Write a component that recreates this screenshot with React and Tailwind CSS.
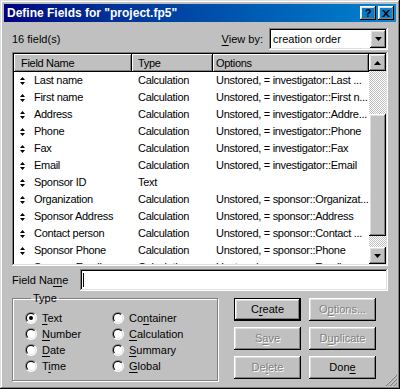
import React from 'react';

const raised = 'shadow-[inset_-1px_-1px_#000,inset_1px_1px_#fff,inset_-2px_-2px_#808080,inset_2px_2px_#dfdfdf]';
const sunken = 'shadow-[inset_-1px_-1px_#fff,inset_1px_1px_#808080,inset_-2px_-2px_#dfdfdf,inset_2px_2px_#000]';
const headCell = 'shadow-[inset_-1px_-1px_#000,inset_1px_1px_#fff,inset_-2px_-2px_#808080]';

const fields = [
    ['Last name', 'Calculation', 'Unstored, = investigator::Last ...'],
    ['First name', 'Calculation', 'Unstored, = investigator::First n...'],
    ['Address', 'Calculation', 'Unstored, = investigator::Addre...'],
    ['Phone', 'Calculation', 'Unstored, = investigator::Phone'],
    ['Fax', 'Calculation', 'Unstored, = investigator::Fax'],
    ['Email', 'Calculation', 'Unstored, = investigator::Email'],
    ['Sponsor ID', 'Text', ''],
    ['Organization', 'Calculation', 'Unstored, = sponsor::Organizat...'],
    ['Sponsor Address', 'Calculation', 'Unstored, = sponsor::Address'],
    ['Contact person', 'Calculation', 'Unstored, = sponsor::Contact ...'],
    ['Sponsor Phone', 'Calculation', 'Unstored, = sponsor::Phone'],
    ['Sponsor Email', 'Calculation', 'Unstored, = sponsor::Email'],
];

// label with one underlined access key
function Key({ text, at }) {
    return (
        <>
            {text.slice(0, at)}
            <span className="underline underline-offset-[2px]">{text[at]}</span>
            {text.slice(at + 1)}
        </>
    );
}

function MoveGlyph() {
    return (
        <svg width="5" height="8" viewBox="0 0 5 8" className="block">
            <path d="M2.5 0 L5 3 L0 3 Z M0 5 L5 5 L2.5 8 Z" fill="#000" />
        </svg>
    );
}

function Arrow({ up }) {
    return (
        <svg width="7" height="4" viewBox="0 0 7 4" className="block">
            <path d={up ? 'M3.5 0 L7 4 L0 4 Z' : 'M0 0 L7 0 L3.5 4 Z'} fill="#000" />
        </svg>
    );
}

function Radio({ checked, label }) {
    return (
        <div className="flex items-center h-[16px]">
            <div className="relative w-[12px] h-[12px] rounded-full bg-[linear-gradient(135deg,#808080_50%,#fff_50%)] p-[1px]">
                <div className="w-full h-full rounded-full bg-[linear-gradient(135deg,#000_50%,#dfdfdf_50%)] p-[1px]">
                    <div className="w-full h-full rounded-full bg-white flex items-center justify-center">
                        {checked && <div className="w-[4px] h-[4px] rounded-full bg-black" />}
                    </div>
                </div>
            </div>
            <span className="ml-[5px]">{label}</span>
        </div>
    );
}

function Btn({ children, disabled, isDefault }) {
    const text = disabled ? 'text-[#808080] [text-shadow:1px_1px_0_#fff]' : 'text-black';
    if (isDefault) {
        return (
            <div className="border border-black h-[23px]">
                <div className={`${raised} h-full flex items-center justify-center ${text}`}>{children}</div>
            </div>
        );
    }
    return <div className={`${raised} h-[23px] flex items-center justify-center ${text}`}>{children}</div>;
}

export default function App() {
    return (
        <div className="relative w-[400px] h-[389px] bg-[#c0c0c0] p-[4px] shadow-[inset_-1px_-1px_#000,inset_1px_1px_#dfdfdf,inset_-2px_-2px_#808080,inset_2px_2px_#fff] font-['Liberation_Sans',Arial,sans-serif] text-[11px] text-black leading-none overflow-hidden">
            {/* title bar */}
            <div className="h-[18px] flex items-center bg-gradient-to-r from-[#000080] to-[#1084d0] pl-[3px] pr-[2px]">
                <span className="text-white font-bold text-[12px] flex-1">Define Fields for "project.fp5"</span>
                <div className={`${raised} w-[16px] h-[14px] flex items-center justify-center font-bold text-[11px]`}>?</div>
                <div className={`${raised} w-[16px] h-[14px] flex items-center justify-center ml-[2px]`}>
                    <svg width="8" height="7" viewBox="0 0 8 7">
                        <path d="M0 0h2l2 2.2L6 0h2L5 3.5 8 7H6L4 4.8 2 7H0l3-3.5z" fill="#000" />
                    </svg>
                </div>
            </div>

            <div className="px-[8px]">
                {/* count + view by */}
                <div className="flex items-center mt-[6px] h-[22px]">
                    <span className="flex-1">16 field(s)</span>
                    <span className="mr-[6px]"><Key text="View by:" at={0} /></span>
                    <div className={`${sunken} w-[119px] h-[22px] bg-white flex items-center p-[2px]`}>
                        <span className="flex-1 pl-[2px]">creation order</span>
                        <div className={`${raised} w-[16px] h-[18px] bg-[#c0c0c0] flex items-center justify-center`}>
                            <Arrow />
                        </div>
                    </div>
                </div>

                {/* field list */}
                <div className={`${sunken} mt-[2px] h-[214px] p-[2px] bg-white flex`}>
                    <div className="flex-1 overflow-hidden tracking-[-0.3px]">
                        <div className="flex h-[18px] bg-[#c0c0c0]">
                            <div className={`${headCell} w-[118px] pl-[7px] flex items-center`}>Field Name</div>
                            <div className={`${headCell} w-[81px] pl-[6px] flex items-center`}>Type</div>
                            <div className={`${headCell} flex-1 pl-[3px] flex items-center`}>Options</div>
                        </div>
                        {fields.map(([name, type, opts]) => (
                            <div key={name} className="flex h-[17px] items-center whitespace-nowrap">
                                <div className="w-[118px] flex items-center pl-[6px]">
                                    <MoveGlyph />
                                    <span className="ml-[9px]">{name}</span>
                                </div>
                                <div className="w-[81px] pl-[6px]">{type}</div>
                                <div className="flex-1 pl-[3px] overflow-hidden">{opts}</div>
                            </div>
                        ))}
                    </div>
                    {/* scrollbar */}
                    <div className="w-[17px] flex flex-col bg-[repeating-conic-gradient(#c0c0c0_0_25%,#fff_0_50%)] bg-size-[2px_2px]">
                        <div className={`${raised} h-[17px] bg-[#c0c0c0] flex items-center justify-center`}><Arrow up /></div>
                        <div className="h-[43px]" />
                        <div className={`${raised} h-[122px] bg-[#c0c0c0]`} />
                        <div className="flex-1" />
                        <div className={`${raised} h-[17px] bg-[#c0c0c0] flex items-center justify-center`}><Arrow /></div>
                    </div>
                </div>

                {/* field name */}
                <div className="flex items-center mt-[3px] h-[22px]">
                    <span className="w-[68px]">Field Na<span className="underline underline-offset-[2px]">m</span>e</span>
                    <div className={`${sunken} flex-1 h-[22px] bg-white flex items-center pl-[3px]`}>
                        <div className="w-[1px] h-[14px] bg-black" />
                    </div>
                </div>

                {/* type + buttons */}
                <div className="flex mt-[2px]">
                    <fieldset className="w-[206px] h-[88px] border border-[#808080] shadow-[inset_1px_1px_#fff,1px_1px_#fff] pl-[12px] pt-[6px] m-0">
                        <legend className="px-[2px] ml-[6px]">Type</legend>
                        <div className="grid grid-cols-[87px_1fr]">
                            <div className="flex flex-col">
                                <Radio checked label={<Key text="Text" at={0} />} />
                                <Radio label={<Key text="Number" at={0} />} />
                                <Radio label={<Key text="Date" at={0} />} />
                                <Radio label={<Key text="Time" at={1} />} />
                            </div>
                            <div className="flex flex-col">
                                <Radio label={<Key text="Container" at={2} />} />
                                <Radio label={<Key text="Calculation" at={0} />} />
                                <Radio label={<Key text="Summary" at={0} />} />
                                <Radio label={<Key text="Global" at={0} />} />
                            </div>
                        </div>
                    </fieldset>
                    <div className="ml-[16px] mt-[5px] grid grid-cols-[67px_67px] gap-x-[8px] gap-y-[6px] h-[81px]">
                        <Btn isDefault><Key text="Create" at={1} /></Btn>
                        <Btn disabled><Key text="Options..." at={1} /></Btn>
                        <Btn disabled><Key text="Save" at={1} /></Btn>
                        <Btn disabled><Key text="Duplicate" at={1} /></Btn>
                        <Btn disabled><Key text="Delete" at={2} /></Btn>
                        <Btn><Key text="Done" at={3} /></Btn>
                    </div>
                </div>
            </div>

            {/* size grip */}
            <svg width="12" height="12" viewBox="0 0 12 12" className="absolute right-[3px] bottom-[3px]">
                <path d="M11 1 L1 11 M11 5 L5 11 M11 9 L9 11" stroke="#fff" strokeWidth="1" />
                <path d="M12 1 L1 12 M12 5 L5 12 M12 9 L9 12" stroke="#808080" strokeWidth="1.2" />
            </svg>
        </div>
    );
}
